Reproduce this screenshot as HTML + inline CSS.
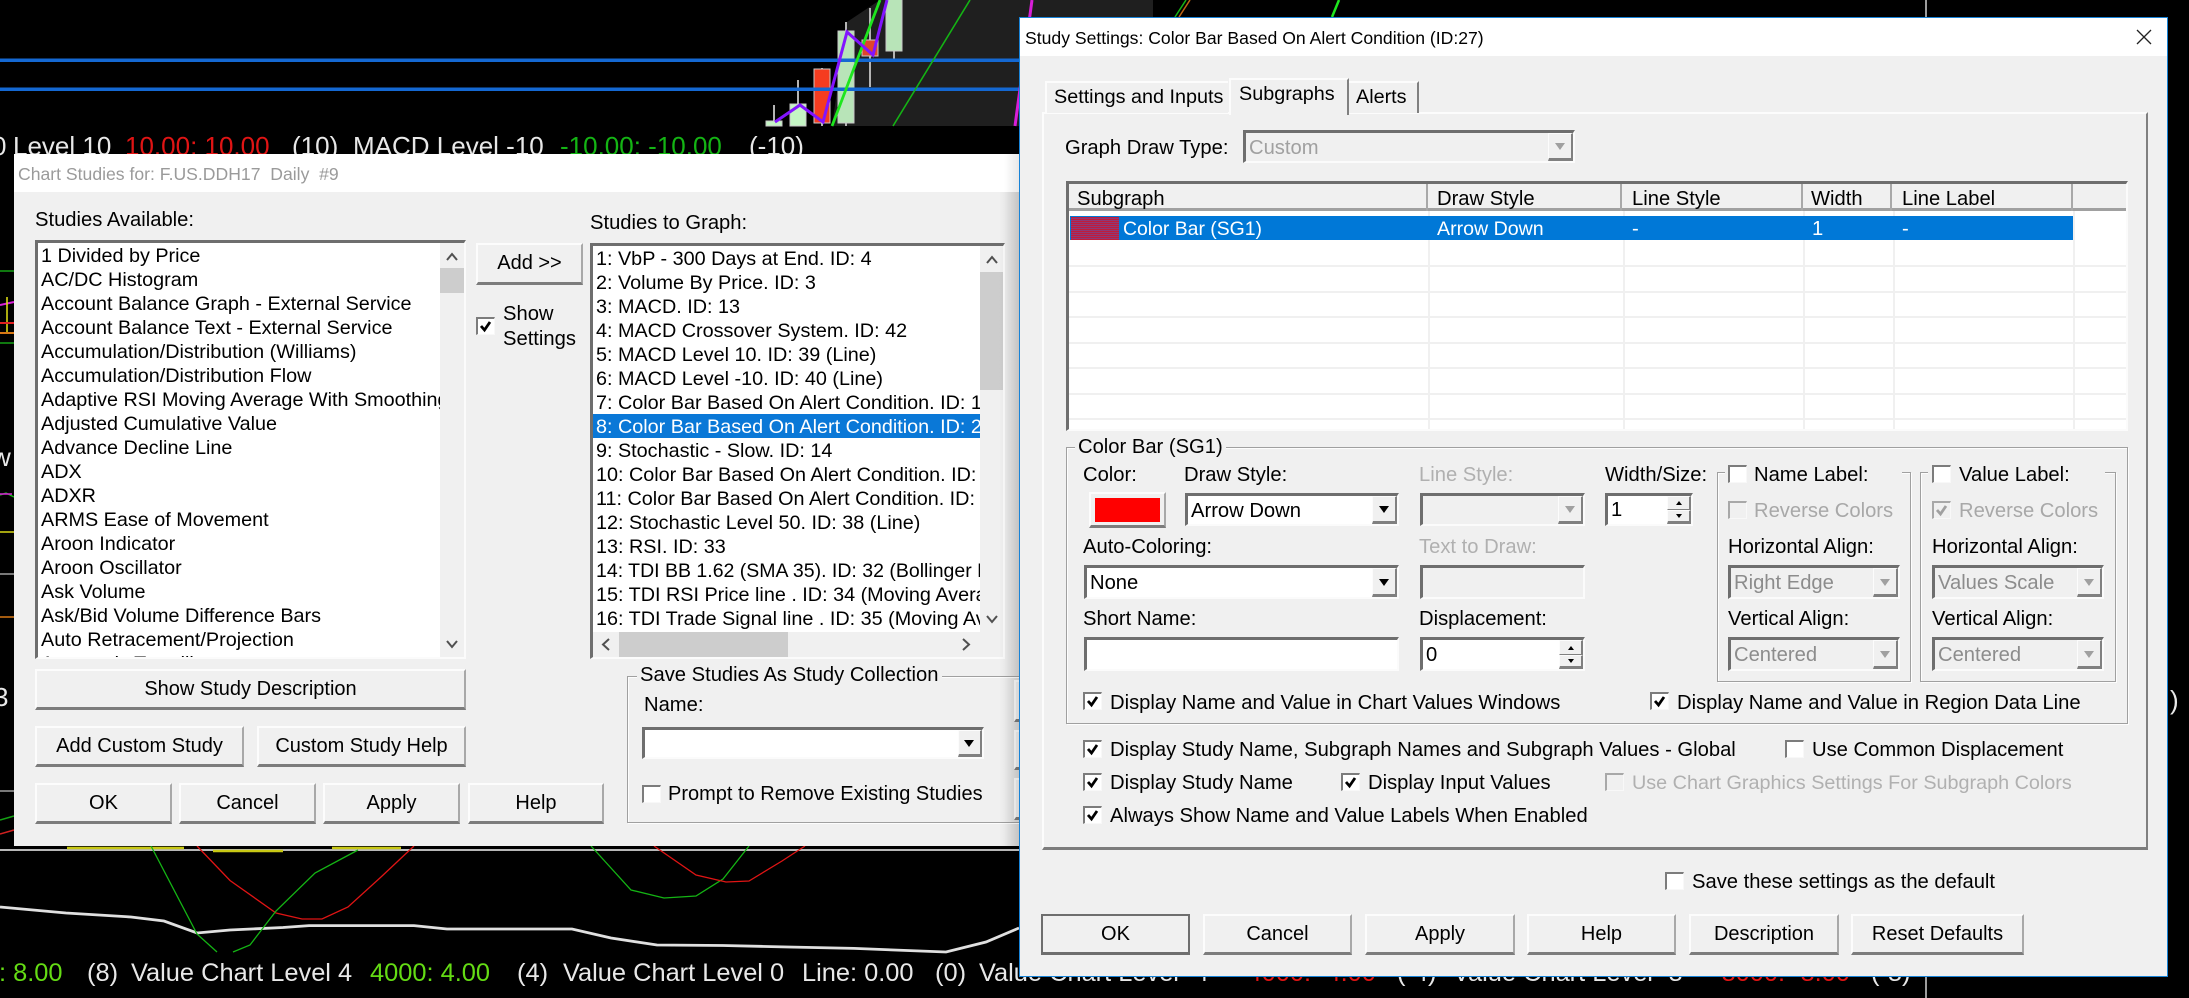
<!DOCTYPE html>
<html><head><meta charset="utf-8"><title>Study Settings</title>
<style>
html,body{margin:0;padding:0;background:#000;}
#p{position:relative;width:2189px;height:998px;overflow:hidden;background:#000;font-family:"Liberation Sans",Arial,sans-serif;font-size:20px;color:#000;filter:blur(.35px);}
#p div,#p span{position:absolute;box-sizing:border-box;white-space:nowrap;}
.t{height:24px;line-height:24px;font-size:20.2px;}
.tt{font-size:17.6px;}
.g{color:#a0a0a0;}
.btn{background:#f0f0f0;border-top:2px solid #fcfcfc;border-left:2px solid #fcfcfc;border-right:2px solid #a8a8a8;border-bottom:3px solid #7c7c7c;text-align:center;display:flex;align-items:center;justify-content:center;}
.sk{border-top:3px solid #6e6e6e;border-left:3px solid #6e6e6e;border-right:2px solid #fbfbfb;border-bottom:2px solid #fbfbfb;background:#fff;}
.dis{background:#f0f0f0;}
.ab{background:#f0f0f0;border-top:1px solid #fcfcfc;border-left:1px solid #fcfcfc;border-right:2px solid #808080;border-bottom:3px solid #808080;}
.tri{width:0;height:0;border-left:5px solid transparent;border-right:5px solid transparent;border-top:7px solid #000;}
.tg{border-top-color:#a0a0a0;}
.c{width:19px;height:18px;background:#fff;border-top:2px solid #7c7c7c;border-left:2px solid #7c7c7c;border-right:1px solid #f8f8f8;border-bottom:1px solid #f8f8f8;}
.cd{background:#f0f0f0;border-top-color:#a8a8a8;border-left-color:#a8a8a8;}
.c svg{position:absolute;left:0;top:0;}
.gb{border:1px solid #a0a0a0;box-shadow:1px 1px 0 #fdfdfd,inset 1px 1px 0 #fdfdfd;}
.lg{background:#f0f0f0;padding:0 3px;height:24px;line-height:24px;font-size:20.2px;}
.li{left:3px;height:24px;line-height:24px;font-size:19.8px;}
.chw{color:#e8e8e8;font-size:26px;height:30px;line-height:30px;}
.chb{font-size:25.4px;top:958px;}
</style></head><body><div id="p">

<svg style="position:absolute;left:0;top:0" width="2189" height="998" xmlns="http://www.w3.org/2000/svg">
<polygon points="832,126 847,22 880,0 1153,0 1153,17 1019,17 1019,126" fill="#1f1f1f"/>
<g stroke="#b4b4b4" stroke-width="2"><line x1="774" y1="105" x2="774" y2="126"/><line x1="798" y1="80" x2="798" y2="126"/><line x1="822" y1="68" x2="822" y2="126"/><line x1="846" y1="22" x2="846" y2="126"/><line x1="870" y1="8" x2="870" y2="87"/><line x1="894" y1="50" x2="894" y2="59"/></g>
<g stroke="#c8c8c8" stroke-width="1"><rect x="766" y="121" width="16" height="5" fill="#c4f5c4"/><rect x="790" y="104" width="16" height="22" fill="#c4f5c4"/><rect x="814" y="69" width="16" height="54" fill="#f53c20"/><rect x="838" y="31" width="16" height="92" fill="#b8e4b8"/><rect x="862" y="40" width="16" height="16" fill="#e0452c"/><rect x="886" y="-2" width="16" height="53" fill="#b8e4b8"/></g>
<rect x="0" y="58.500" width="1019" height="3.500" fill="#1468d2"/><rect x="0" y="87.500" width="1019" height="3.500" fill="#1468d2"/>
<path d="M893 126 L970 0" stroke="#14b414" stroke-width="1.600" fill="none"/>
<path d="M832 126 L880 0" stroke="#1ee61e" stroke-width="2.800" fill="none"/>
<path d="M775 122 L800 105 L823 122 L847 32 L873 55 L887 0" stroke="#8214ff" stroke-width="3" fill="none"/>
<path d="M1015 126 L1032 0" stroke="#d81ed8" stroke-width="3" fill="none"/>
<path d="M1179 17 L1190 0" stroke="#c06414" stroke-width="1.500" fill="none"/><path d="M1175 17 L1186 0" stroke="#14b414" stroke-width="1.500" fill="none"/>
<path d="M1332 17 L1339 0" stroke="#1ee61e" stroke-width="2.500" fill="none"/>
<line x1="1926" y1="0" x2="1926" y2="17" stroke="#d0d0d0" stroke-width="1.500"/>
<line x1="1926" y1="977" x2="1926" y2="998" stroke="#d0d0d0" stroke-width="1.500"/>
<path d="M0 271 H14 M0 343 H14" stroke="#14a014" stroke-width="1.500"/><path d="M0 305 L14 302" stroke="#d81ed8" stroke-width="2"/><path d="M7 297 V333" stroke="#e6e614" stroke-width="1.500"/><path d="M0 323 H14" stroke="#e02020" stroke-width="2"/><path d="M0 333 H14" stroke="#d87814" stroke-width="2"/>
<path d="M0 495 L6 493 L14 497" stroke="#14b414" stroke-width="1.500" fill="none"/><path d="M0 494 H12" stroke="#d81ed8" stroke-width="1.500"/><path d="M0 532 H14" stroke="#d8d814" stroke-width="1.500"/><path d="M0 574 H14" stroke="#a0a0a0" stroke-width="1.500"/><path d="M0 617 H14" stroke="#d87814" stroke-width="1.500"/><path d="M0 791 H14" stroke="#a0a0a0" stroke-width="1.500"/><path d="M0 820 L14 816" stroke="#14a014" stroke-width="1.500" fill="none"/><path d="M0 834 L14 830" stroke="#d02020" stroke-width="1.500" fill="none"/>
<rect x="0" y="849" width="1019" height="2" fill="#b8b8b8"/>
<path d="M67 848 H184 M213 851 H283 M332 848 H401" stroke="#c8c814" stroke-width="2.500"/>
<path d="M0 907 L66 913 L131 917 L164 921 L197 933 L230 930 L283 927.500 L309 925.600 L414 925.600 L447 929 L572 929 L611 938 L657 945 L723 945.500 L788 947 L854 948.400 L920 951 L946 952 L986 942 L1019 928" stroke="#e0e0e0" stroke-width="2.800" fill="none"/>
<path d="M197 846 L230 880.500 L276 913 L302 919 L322 919 L348 907 L381 877 L414 846" stroke="#e01414" stroke-width="1.300" fill="none"/>
<path d="M151 846 L197 934 L217 952 M233 952 L250 945 L276 911 L315 873 L358 850" stroke="#14b414" stroke-width="1.300" fill="none"/>
<path d="M591 846 L631 890 L664 898 L696 896 L723 879 L749 846" stroke="#14b414" stroke-width="1.300" fill="none"/>
<path d="M654 846 L696 875 L726 882 L749 881 L782 861 L805 846" stroke="#e01414" stroke-width="1.300" fill="none"/>
</svg>

<!-- chart text -->
<span class="chw" style="left:-8px;top:131px">0</span>
<span class="chw" style="left:13px;top:131px">Level 10</span>
<span class="chw" style="left:125px;top:131px;color:#e01414">10.00: 10.00</span>
<span class="chw" style="left:292px;top:131px">(10)</span>
<span class="chw" style="left:353px;top:131px">MACD Level -10</span>
<span class="chw" style="left:560px;top:131px;color:#14b414">-10.00: -10.00</span>
<span class="chw" style="left:749px;top:131px">(-10)</span>
<span class="chw chb" style="left:-1px;color:#64dc14">: 8.00</span>
<span class="chw chb" style="left:87px">(8)</span>
<span class="chw chb" style="left:131px">Value Chart Level 4</span>
<span class="chw chb" style="left:370px;color:#64dc14">4000: 4.00</span>
<span class="chw chb" style="left:517px">(4)</span>
<span class="chw chb" style="left:563px">Value Chart Level 0</span>
<span class="chw chb" style="left:802px">Line: 0.00</span>
<span class="chw chb" style="left:935px">(0)</span>
<span class="chw chb" style="left:979px">Value Chart Level -4</span>
<span class="chw chb" style="left:1239px;color:#e01414">-4000: -4.00</span>
<span class="chw chb" style="left:1397px">(-4)</span>
<span class="chw chb" style="left:1453px">Value Chart Level -8</span>
<span class="chw chb" style="left:1713px;color:#e01414">-8000: -8.00</span>
<span class="chw chb" style="left:1871px">(-8)</span>
<span class="chw" style="left:-6px;top:682px">3</span>
<span class="chw" style="left:-8px;top:442px">w</span>
<span class="chw" style="left:2170px;top:685px">)</span>

<!-- LEFT DIALOG -->
<div style="left:14px;top:154px;width:1010px;height:692px;background:#f0f0f0;overflow:hidden">
 <div style="left:0;top:0;width:100%;height:38px;background:#fff"></div>
 <div class="t tt" style="left:4px;top:8px;color:#9a9a9a">Chart Studies for: F.US.DDH17&nbsp; Daily&nbsp; #9</div>
 <div style="right:0;top:0;width:20px;height:100%;background:linear-gradient(90deg,rgba(0,0,0,0),rgba(0,0,0,.12))"></div>
</div>

<div class="t" style="left:35px;top:208px">Studies Available:</div>
<div class="sk" style="left:35px;top:240px;width:431px;height:419px;overflow:hidden">
 <div style="left:0;top:0;width:402px;height:416px;overflow:hidden">
 <div class="li" style="top:1px">1 Divided by Price</div>
 <div class="li" style="top:25px">AC/DC Histogram</div>
 <div class="li" style="top:49px">Account Balance Graph - External Service</div>
 <div class="li" style="top:73px">Account Balance Text - External Service</div>
 <div class="li" style="top:97px">Accumulation/Distribution (Williams)</div>
 <div class="li" style="top:121px">Accumulation/Distribution Flow</div>
 <div class="li" style="top:145px">Adaptive RSI Moving Average With Smoothing</div>
 <div class="li" style="top:169px">Adjusted Cumulative Value</div>
 <div class="li" style="top:193px">Advance Decline Line</div>
 <div class="li" style="top:217px">ADX</div>
 <div class="li" style="top:241px">ADXR</div>
 <div class="li" style="top:265px">ARMS Ease of Movement</div>
 <div class="li" style="top:289px">Aroon Indicator</div>
 <div class="li" style="top:313px">Aroon Oscillator</div>
 <div class="li" style="top:337px">Ask Volume</div>
 <div class="li" style="top:361px">Ask/Bid Volume Difference Bars</div>
 <div class="li" style="top:385px">Auto Retracement/Projection</div>
 <div class="li" style="top:409px">Automatic Trendlines</div>
 </div>
 <div style="left:402px;top:0;width:24px;height:416px;background:#f0f0f0">
  <svg style="position:absolute;left:6px;top:9px" width="12" height="10"><path d="M1 8 L6 2 L11 8" fill="none" stroke="#505050" stroke-width="2"/></svg>
  <div style="left:0;top:25px;width:24px;height:25px;background:#cdcdcd"></div>
  <svg style="position:absolute;left:6px;top:396px" width="12" height="10"><path d="M1 2 L6 8 L11 2" fill="none" stroke="#505050" stroke-width="2"/></svg>
 </div>
</div>

<div class="btn" style="left:476px;top:243px;width:107px;height:42px">Add &gt;&gt;</div>
<div class="c" style="left:476px;top:317px"><svg width="16" height="15"><path d="M3 7 L6.500 11 L12 3" fill="none" stroke="#000" stroke-width="2.800"/></svg></div>
<div class="t" style="left:503px;top:302px">Show</div>
<div class="t" style="left:503px;top:327px">Settings</div>

<div class="t" style="left:590px;top:211px">Studies to Graph:</div>
<div class="sk" style="left:590px;top:243px;width:415px;height:416px;overflow:hidden">
 <div style="left:0;top:0;width:387px;height:386px;overflow:hidden">
 <div class="li" style="top:1px">1: VbP - 300 Days at End. ID: 4</div>
 <div class="li" style="top:25px">2: Volume By Price. ID: 3</div>
 <div class="li" style="top:49px">3: MACD. ID: 13</div>
 <div class="li" style="top:73px">4: MACD Crossover System. ID: 42</div>
 <div class="li" style="top:97px">5: MACD Level 10. ID: 39 (Line)</div>
 <div class="li" style="top:121px">6: MACD Level -10. ID: 40 (Line)</div>
 <div class="li" style="top:145px">7: Color Bar Based On Alert Condition. ID: 18</div>
 <div style="left:0;top:168px;width:387px;height:24px;background:#0a78d7"></div>
 <div class="li" style="top:169px;color:#fff">8: Color Bar Based On Alert Condition. ID: 27</div>
 <div class="li" style="top:193px">9: Stochastic - Slow. ID: 14</div>
 <div class="li" style="top:217px">10: Color Bar Based On Alert Condition. ID: 19</div>
 <div class="li" style="top:241px">11: Color Bar Based On Alert Condition. ID: 28</div>
 <div class="li" style="top:265px">12: Stochastic Level 50. ID: 38 (Line)</div>
 <div class="li" style="top:289px">13: RSI. ID: 33</div>
 <div class="li" style="top:313px;font-size:19.500px">14: TDI BB 1.62 (SMA 35). ID: 32 (Bollinger Bands)</div>
 <div class="li" style="top:337px">15: TDI RSI Price line . ID: 34 (Moving Average)</div>
 <div class="li" style="top:361px">16: TDI Trade Signal line . ID: 35 (Moving Average)</div>
 </div>
 <div style="left:387px;top:0;width:24px;height:386px;background:#f0f0f0">
  <svg style="position:absolute;left:6px;top:9px" width="12" height="10"><path d="M1 8 L6 2 L11 8" fill="none" stroke="#505050" stroke-width="2"/></svg>
  <div style="left:0;top:26px;width:24px;height:118px;background:#cdcdcd"></div>
  <svg style="position:absolute;left:6px;top:368px" width="12" height="10"><path d="M1 2 L6 8 L11 2" fill="none" stroke="#505050" stroke-width="2"/></svg>
 </div>
 <div style="left:0;top:386px;width:410px;height:25px;background:#f0f0f0">
  <svg style="position:absolute;left:8px;top:6px" width="10" height="13"><path d="M8 1 L2 6.500 L8 12" fill="none" stroke="#505050" stroke-width="2"/></svg>
  <div style="left:26px;top:0;width:169px;height:25px;background:#cdcdcd"></div>
  <svg style="position:absolute;left:368px;top:6px" width="10" height="13"><path d="M2 1 L8 6.500 L2 12" fill="none" stroke="#505050" stroke-width="2"/></svg>
 </div>
</div>

<div class="btn" style="left:35px;top:669px;width:431px;height:41px">Show Study Description</div>
<div class="btn" style="left:35px;top:726px;width:209px;height:41px">Add Custom Study</div>
<div class="btn" style="left:257px;top:726px;width:209px;height:41px">Custom Study Help</div>
<div class="btn" style="left:35px;top:783px;width:137px;height:41px">OK</div>
<div class="btn" style="left:179px;top:783px;width:137px;height:41px">Cancel</div>
<div class="btn" style="left:323px;top:783px;width:137px;height:41px">Apply</div>
<div class="btn" style="left:468px;top:783px;width:136px;height:41px">Help</div>

<div class="gb" style="left:627px;top:676px;width:400px;height:147px"></div>
<div class="lg" style="left:637px;top:663px">Save Studies As Study Collection</div>
<div class="t" style="left:644px;top:693px">Name:</div>
<div class="sk" style="left:642px;top:727px;width:342px;height:32px"><div class="ab" style="right:0;top:0;width:24px;height:27px"><div class="tri" style="left:5px;top:9px"></div></div></div>
<div class="c" style="left:642px;top:785px"></div>
<div class="t" style="left:668px;top:782px;font-size:20px">Prompt to Remove Existing Studies</div>
<div style="left:1014px;top:680px;width:5px;height:42px;background:#f0f0f0;border-top:2px solid #fcfcfc;border-left:2px solid #fcfcfc;border-bottom:3px solid #7c7c7c"></div>
<div style="left:1014px;top:730px;width:5px;height:40px;background:#f0f0f0;border-top:2px solid #fcfcfc;border-left:2px solid #fcfcfc;border-bottom:3px solid #7c7c7c"></div>
<div style="left:1014px;top:778px;width:5px;height:42px;background:#f0f0f0;border-top:2px solid #fcfcfc;border-left:2px solid #fcfcfc;border-bottom:3px solid #7c7c7c"></div>
<div style="left:999px;top:192px;width:20px;height:654px;background:linear-gradient(90deg,rgba(0,0,0,0),rgba(0,0,0,.1))"></div>

<!-- RIGHT DIALOG -->
<div style="left:1019px;top:17px;width:1149px;height:960px;background:#f0f0f0;border:1px solid #1883d7">
 <div style="left:0;top:0;width:100%;height:38px;background:#fff"></div>
</div>
<div class="t tt" style="left:1025px;top:26px">Study Settings: Color Bar Based On Alert Condition (ID:27)</div>
<svg style="position:absolute;left:2136px;top:29px" width="16" height="16"><path d="M1 1 L15 15 M15 1 L1 15" stroke="#222" stroke-width="1.300"/></svg>

<!-- tabs & panel -->
<div style="left:1042px;top:112px;width:1106px;height:738px;background:#f0f0f0;border-top:2px solid #fcfcfc;border-left:2px solid #fcfcfc;border-right:2px solid #808080;border-bottom:3px solid #7c7c7c"></div>
<div style="left:1045px;top:81px;width:183px;height:32px;background:#f0f0f0;border-top:2px solid #fcfcfc;border-left:2px solid #fcfcfc"></div>
<div class="t" style="left:1054px;top:85px;font-size:19.800px">Settings and Inputs</div>
<div style="left:1229px;top:78px;width:120px;height:37px;background:#f0f0f0;border-top:2px solid #fcfcfc;border-left:2px solid #fcfcfc;border-right:2px solid #808080"></div>
<div class="t" style="left:1239px;top:82px;font-size:19.800px">Subgraphs</div>
<div style="left:1349px;top:81px;width:70px;height:32px;background:#f0f0f0;border-top:2px solid #fcfcfc;border-right:2px solid #808080"></div>
<div class="t" style="left:1356px;top:85px;font-size:19.800px">Alerts</div>

<div class="t" style="left:1065px;top:136px">Graph Draw Type:</div>
<div class="sk dis" style="left:1243px;top:130px;width:332px;height:33px"><div class="t g" style="left:3px;top:3px">Custom</div><div class="ab" style="right:0;top:0;width:25px;height:28px"><div class="tri tg" style="left:6px;top:9px"></div></div></div>

<!-- table -->
<div class="sk" style="left:1066px;top:181px;width:1062px;height:250px;overflow:hidden">
 <div style="left:0;top:0;width:1060px;height:27px;background:#f0f0f0;border-bottom:3px solid #a0a0a0"></div>
 <div style="left:357px;top:0;width:2px;height:27px;background:#a8a8a8"></div>
 <div style="left:551px;top:0;width:2px;height:27px;background:#a8a8a8"></div>
 <div style="left:732px;top:0;width:2px;height:27px;background:#a8a8a8"></div>
 <div style="left:821px;top:0;width:2px;height:27px;background:#a8a8a8"></div>
 <div style="left:1002px;top:0;width:2px;height:27px;background:#a8a8a8"></div>
 <div style="left:0;top:81px;width:1060px;height:2px;background:#f0f0f0"></div>
 <div style="left:0;top:107px;width:1060px;height:2px;background:#f0f0f0"></div>
 <div style="left:0;top:132px;width:1060px;height:2px;background:#f0f0f0"></div>
 <div style="left:0;top:158px;width:1060px;height:2px;background:#f0f0f0"></div>
 <div style="left:0;top:183px;width:1060px;height:2px;background:#f0f0f0"></div>
 <div style="left:0;top:209px;width:1060px;height:2px;background:#f0f0f0"></div>
 <div style="left:0;top:234px;width:1060px;height:2px;background:#f0f0f0"></div>
 <div style="left:359px;top:27px;width:2px;height:220px;background:#f0f0f0"></div>
 <div style="left:554px;top:27px;width:2px;height:220px;background:#f0f0f0"></div>
 <div style="left:734px;top:27px;width:2px;height:220px;background:#f0f0f0"></div>
 <div style="left:824px;top:27px;width:2px;height:220px;background:#f0f0f0"></div>
 <div style="left:1004px;top:27px;width:2px;height:220px;background:#f0f0f0"></div>
 <div style="left:1px;top:32px;width:1003px;height:24px;background:#0078d7"></div>
 <div style="left:2px;top:33px;width:48px;height:23px;background:repeating-linear-gradient(0deg,#c01c3c 0 1px,#8c3a78 1px 2px)"></div>
</div>
<div class="t" style="left:1077px;top:187px">Subgraph</div>
<div class="t" style="left:1437px;top:187px">Draw Style</div>
<div class="t" style="left:1632px;top:187px">Line Style</div>
<div class="t" style="left:1811px;top:187px">Width</div>
<div class="t" style="left:1902px;top:187px">Line Label</div>
<div class="t" style="left:1123px;top:217px;color:#fff;font-size:19.400px">Color Bar (SG1)</div>
<div class="t" style="left:1437px;top:217px;color:#fff;font-size:19.600px">Arrow Down</div>
<div class="t" style="left:1632px;top:217px;color:#fff">-</div>
<div class="t" style="left:1812px;top:217px;color:#fff">1</div>
<div class="t" style="left:1902px;top:217px;color:#fff">-</div>

<!-- color bar group -->
<div class="gb" style="left:1066px;top:447px;width:1062px;height:277px"></div>
<div class="lg" style="left:1075px;top:435px">Color Bar (SG1)</div>
<div class="t" style="left:1083px;top:463px">Color:</div>
<div class="t" style="left:1184px;top:463px">Draw Style:</div>
<div class="t g" style="left:1419px;top:463px;color:#b0b0b0">Line Style:</div>
<div class="t" style="left:1605px;top:463px">Width/Size:</div>

<div class="btn" style="left:1089px;top:492px;width:77px;height:36px"></div>
<div style="left:1095px;top:498px;width:65px;height:24px;background:#f00;"></div>

<div class="sk" style="left:1185px;top:493px;width:214px;height:33px"><div class="t" style="left:3px;top:3px">Arrow Down</div><div class="ab" style="right:0;top:0;width:25px;height:28px"><div class="tri" style="left:6px;top:9px"></div></div></div>
<div class="sk dis" style="left:1420px;top:493px;width:165px;height:33px"><div class="ab" style="right:0;top:0;width:25px;height:28px"><div class="tri tg" style="left:6px;top:9px"></div></div></div>
<div class="sk" style="left:1605px;top:493px;width:88px;height:33px"><div class="t" style="left:3px;top:2px">1</div>
 <div class="ab" style="right:0;top:0;width:24px;height:14px;border-bottom-width:1px"><div style="left:8px;top:4px;width:0;height:0;border-left:3px solid transparent;border-right:3px solid transparent;border-bottom:4px solid #000"></div></div>
 <div class="ab" style="right:0;top:14px;width:24px;height:14px"><div style="left:8px;top:3px;width:0;height:0;border-left:3px solid transparent;border-right:3px solid transparent;border-top:4px solid #000"></div></div>
</div>

<div class="t" style="left:1083px;top:535px">Auto-Coloring:</div>
<div class="t" style="left:1419px;top:535px;color:#b0b0b0">Text to Draw:</div>
<div class="sk" style="left:1084px;top:565px;width:315px;height:34px"><div class="t" style="left:3px;top:3px">None</div><div class="ab" style="right:0;top:0;width:25px;height:29px"><div class="tri" style="left:6px;top:10px"></div></div></div>
<div class="sk dis" style="left:1420px;top:565px;width:165px;height:34px"></div>

<div class="t" style="left:1083px;top:607px">Short Name:</div>
<div class="t" style="left:1419px;top:607px">Displacement:</div>
<div class="sk" style="left:1084px;top:637px;width:315px;height:34px"></div>
<div class="sk" style="left:1420px;top:637px;width:165px;height:34px"><div class="t" style="left:3px;top:3px">0</div>
 <div class="ab" style="right:0;top:0;width:24px;height:15px;border-bottom-width:1px"><div style="left:8px;top:5px;width:0;height:0;border-left:3px solid transparent;border-right:3px solid transparent;border-bottom:4px solid #000"></div></div>
 <div class="ab" style="right:0;top:15px;width:24px;height:14px"><div style="left:8px;top:3px;width:0;height:0;border-left:3px solid transparent;border-right:3px solid transparent;border-top:4px solid #000"></div></div>
</div>

<!-- Name label -->
<div class="gb" style="left:1717px;top:472px;width:194px;height:210px"></div>
<div style="left:1725px;top:462px;width:177px;height:24px;background:#f0f0f0"></div>
<div class="c" style="left:1728px;top:465px"></div>
<div class="t" style="left:1754px;top:463px">Name Label:</div>
<div class="c cd" style="left:1728px;top:501px"></div>
<div class="t" style="left:1754px;top:499px;color:#a8a8a8">Reverse Colors</div>
<div class="t" style="left:1728px;top:535px">Horizontal Align:</div>
<div class="sk dis" style="left:1728px;top:565px;width:172px;height:34px"><div class="t g" style="left:3px;top:3px;color:#8c8c8c">Right Edge</div><div class="ab" style="right:0;top:0;width:25px;height:29px"><div class="tri tg" style="left:6px;top:10px"></div></div></div>
<div class="t" style="left:1728px;top:607px">Vertical Align:</div>
<div class="sk dis" style="left:1728px;top:637px;width:172px;height:34px"><div class="t g" style="left:3px;top:3px;color:#8c8c8c">Centered</div><div class="ab" style="right:0;top:0;width:25px;height:29px"><div class="tri tg" style="left:6px;top:10px"></div></div></div>

<!-- Value label -->
<div class="gb" style="left:1920px;top:472px;width:196px;height:210px"></div>
<div style="left:1928px;top:462px;width:177px;height:24px;background:#f0f0f0"></div>
<div class="c" style="left:1932px;top:465px"></div>
<div class="t" style="left:1959px;top:463px">Value Label:</div>
<div class="c cd" style="left:1932px;top:501px"><svg width="16" height="15"><path d="M3 7 L6.500 11 L12 3" fill="none" stroke="#a0a0a0" stroke-width="2.800"/></svg></div>
<div class="t" style="left:1959px;top:499px;color:#a8a8a8">Reverse Colors</div>
<div class="t" style="left:1932px;top:535px">Horizontal Align:</div>
<div class="sk dis" style="left:1932px;top:565px;width:172px;height:34px"><div class="t g" style="left:3px;top:3px;color:#8c8c8c">Values Scale</div><div class="ab" style="right:0;top:0;width:25px;height:29px"><div class="tri tg" style="left:6px;top:10px"></div></div></div>
<div class="t" style="left:1932px;top:607px">Vertical Align:</div>
<div class="sk dis" style="left:1932px;top:637px;width:172px;height:34px"><div class="t g" style="left:3px;top:3px;color:#8c8c8c">Centered</div><div class="ab" style="right:0;top:0;width:25px;height:29px"><div class="tri tg" style="left:6px;top:10px"></div></div></div>

<!-- check rows -->
<div class="c" style="left:1083px;top:692px"><svg width="16" height="15"><path d="M3 7 L6.500 11 L12 3" fill="none" stroke="#000" stroke-width="2.800"/></svg></div>
<div class="t" style="left:1110px;top:691px">Display Name and Value in Chart Values Windows</div>
<div class="c" style="left:1650px;top:692px"><svg width="16" height="15"><path d="M3 7 L6.500 11 L12 3" fill="none" stroke="#000" stroke-width="2.800"/></svg></div>
<div class="t" style="left:1677px;top:691px">Display Name and Value in Region Data Line</div>

<div class="c" style="left:1083px;top:740px"><svg width="16" height="15"><path d="M3 7 L6.500 11 L12 3" fill="none" stroke="#000" stroke-width="2.800"/></svg></div>
<div class="t" style="left:1110px;top:738px">Display Study Name, Subgraph Names and Subgraph Values - Global</div>
<div class="c" style="left:1785px;top:740px"></div>
<div class="t" style="left:1812px;top:738px">Use Common Displacement</div>

<div class="c" style="left:1083px;top:773px"><svg width="16" height="15"><path d="M3 7 L6.500 11 L12 3" fill="none" stroke="#000" stroke-width="2.800"/></svg></div>
<div class="t" style="left:1110px;top:771px">Display Study Name</div>
<div class="c" style="left:1341px;top:773px"><svg width="16" height="15"><path d="M3 7 L6.500 11 L12 3" fill="none" stroke="#000" stroke-width="2.800"/></svg></div>
<div class="t" style="left:1368px;top:771px">Display Input Values</div>
<div class="c cd" style="left:1605px;top:773px"></div>
<div class="t" style="left:1632px;top:771px;color:#b0b0b0;font-size:19.800px">Use Chart Graphics Settings For Subgraph Colors</div>

<div class="c" style="left:1083px;top:806px"><svg width="16" height="15"><path d="M3 7 L6.500 11 L12 3" fill="none" stroke="#000" stroke-width="2.800"/></svg></div>
<div class="t" style="left:1110px;top:804px">Always Show Name and Value Labels When Enabled</div>

<div class="c" style="left:1665px;top:872px"></div>
<div class="t" style="left:1692px;top:870px">Save these settings as the default</div>

<div class="btn" style="left:1041px;top:914px;width:149px;height:41px;border:2px solid #6e6e6e;border-bottom-width:3px">OK</div>
<div class="btn" style="left:1203px;top:914px;width:149px;height:41px">Cancel</div>
<div class="btn" style="left:1365px;top:914px;width:150px;height:41px">Apply</div>
<div class="btn" style="left:1527px;top:914px;width:149px;height:41px">Help</div>
<div class="btn" style="left:1689px;top:914px;width:150px;height:41px">Description</div>
<div class="btn" style="left:1851px;top:914px;width:173px;height:41px">Reset Defaults</div>

</div></body></html>
